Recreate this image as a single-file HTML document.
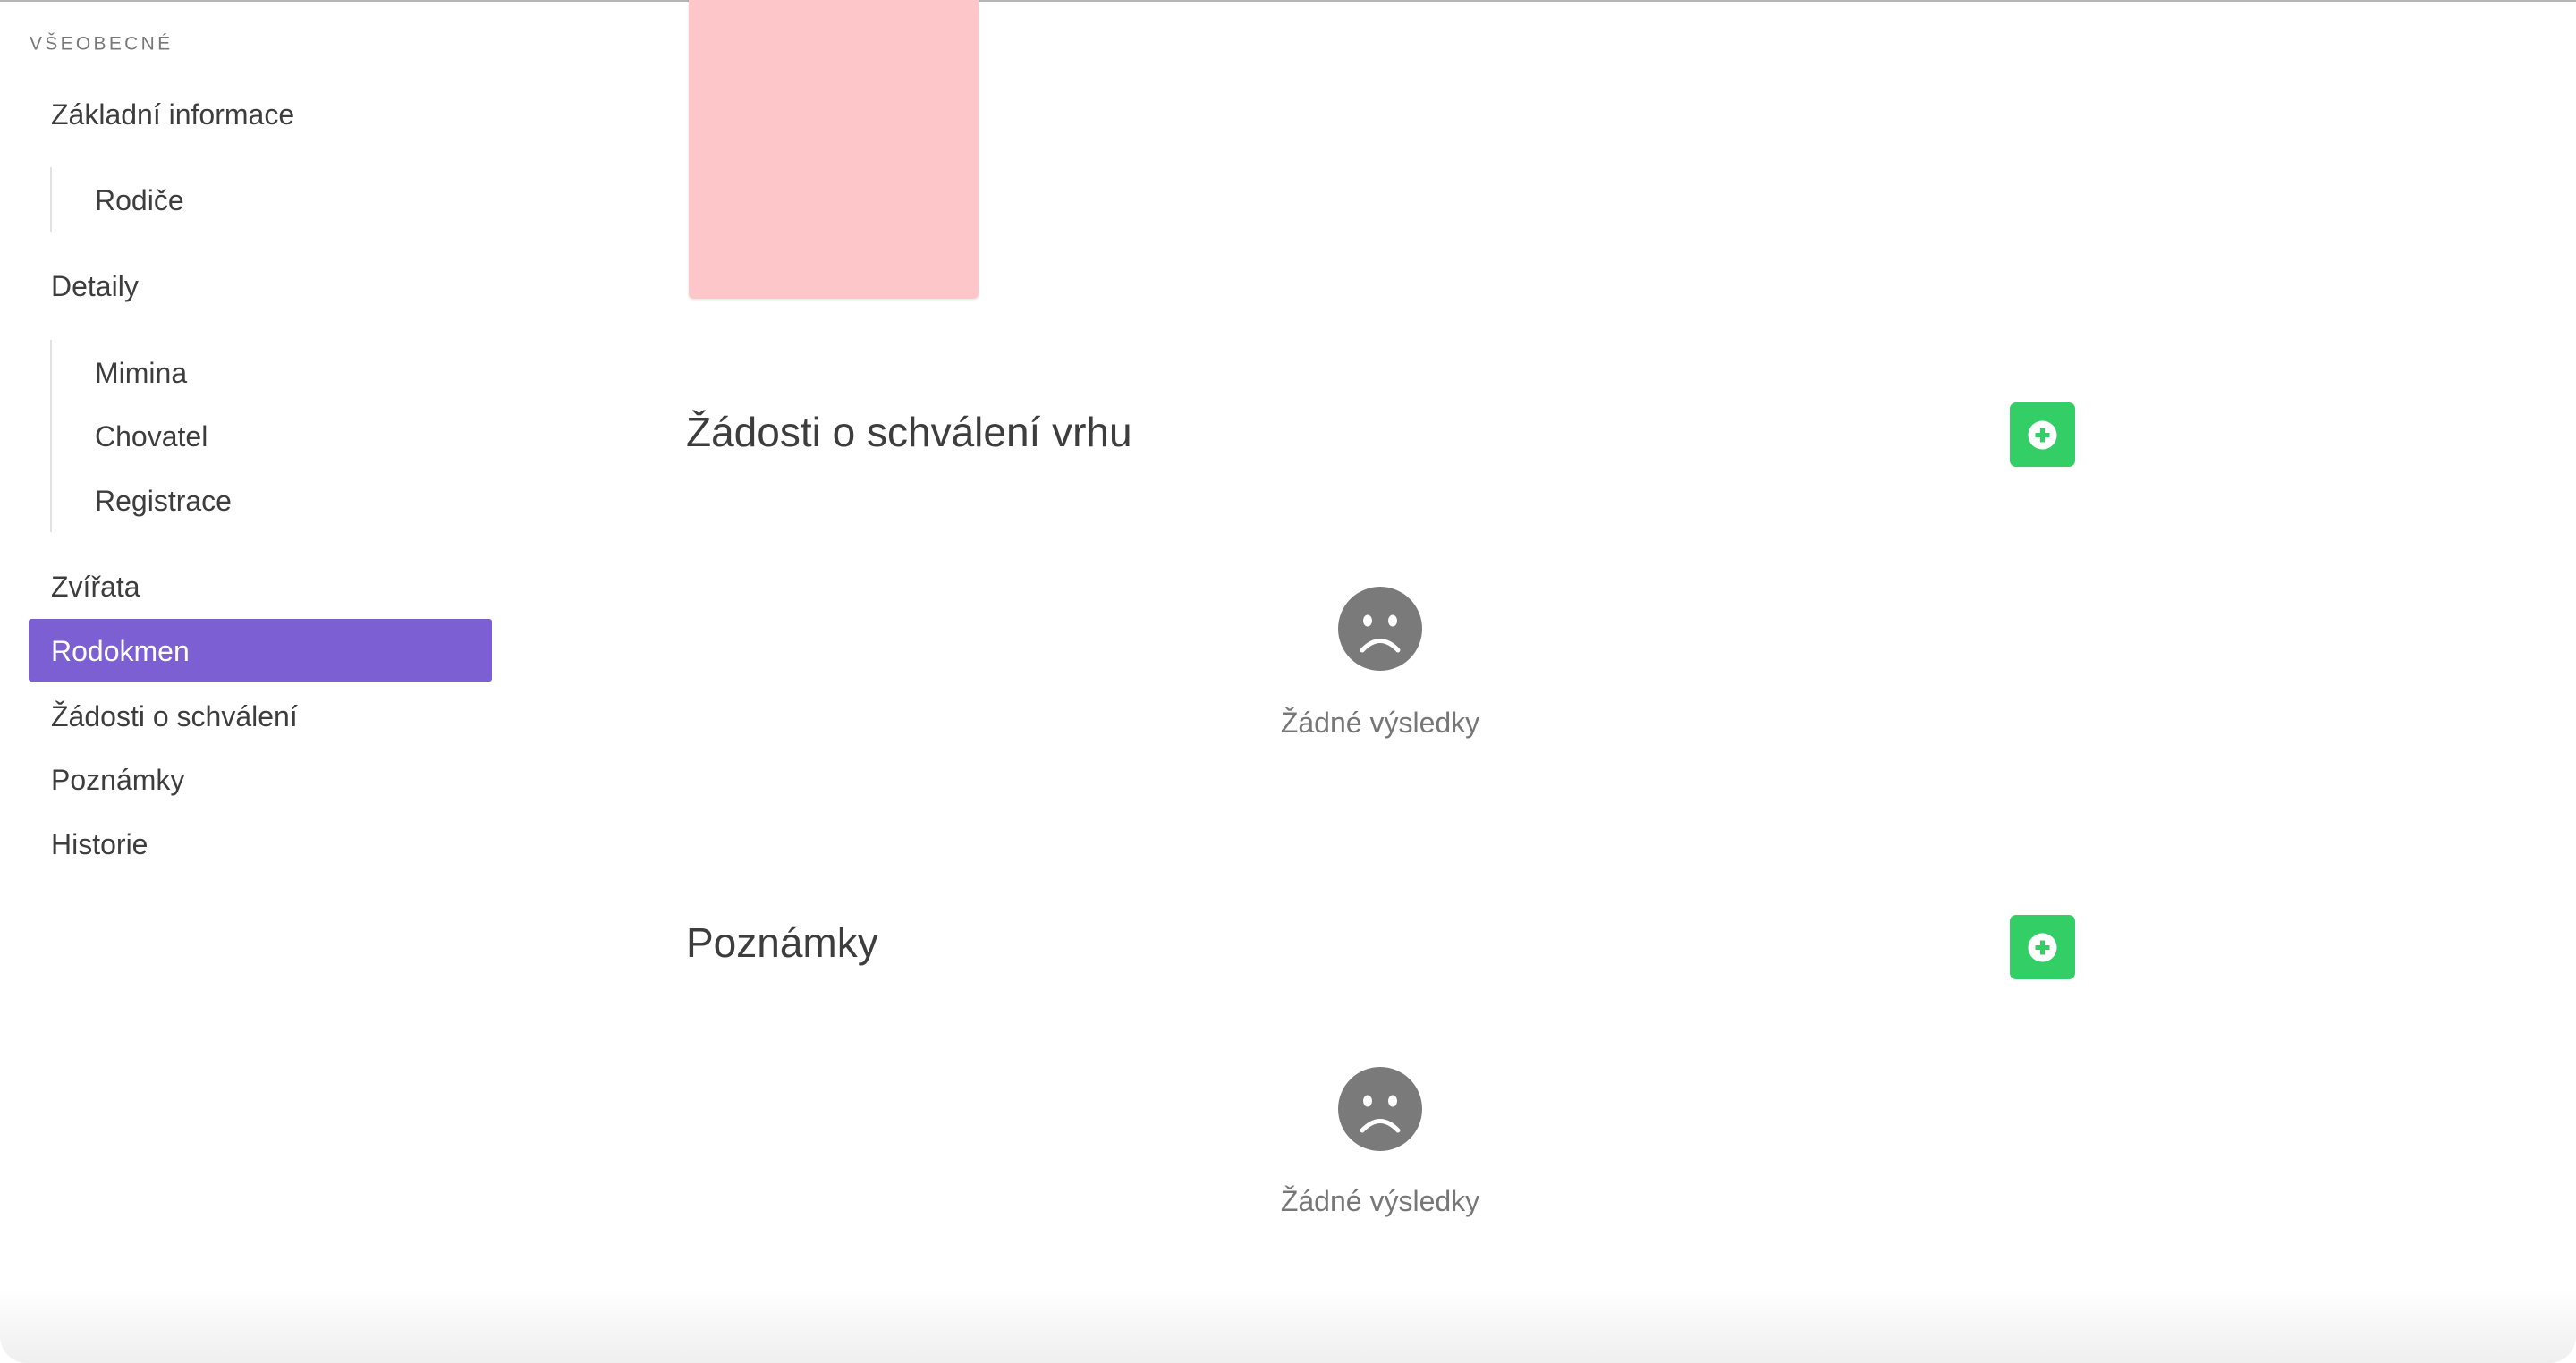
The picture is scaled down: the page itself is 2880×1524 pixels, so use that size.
<!DOCTYPE html>
<html><head><meta charset="utf-8"><style>
*{margin:0;padding:0;box-sizing:border-box}
html,body{width:2880px;height:1524px;overflow:hidden;background:#fff;font-family:"Liberation Sans",sans-serif;color:#3d3d3d}
.top{position:absolute;left:0;top:0;width:2880px;height:2px;background:#b5b5b5}
.t{position:absolute;white-space:nowrap;line-height:1;transform:translateY(-50%)}
.nav{font-size:32px;color:#3d3d3d}
.sec{font-size:21px;letter-spacing:3.3px;color:#777;left:33px;top:49px}
.bar{position:absolute;left:56px;width:2px;background:#e2e2e2}
.active{position:absolute;left:32px;top:692px;width:518px;height:70px;background:#7b5fd3;border-radius:3px}
.pink{position:absolute;left:770px;top:-6px;width:324px;height:340px;background:#fdc6c9;border-radius:5px;box-shadow:0 1px 3px rgba(0,0,0,.12)}
.h{font-size:46px;color:#3d3d3d;left:767px}
.btn{position:absolute;left:2247px;width:73px;height:72px;background:#33cf66;border-radius:7px}
.btn svg{position:absolute;left:20px;top:20px}
.face{position:absolute;left:1496px;width:94px;height:94px}
.nr{font-size:32px;color:#777;left:1543px;transform:translate(-50%,-50%)}
.shade{position:absolute;left:0;top:1440px;width:2880px;height:84px;background:linear-gradient(#fff,#efefef);border-radius:0 0 30px 30px}
</style></head><body>
<div class="top"></div>
<div class="t sec">VŠEOBECNÉ</div>
<div class="t nav" style="left:57px;top:128px">Základní informace</div>
<div class="bar" style="top:187px;height:72px"></div>
<div class="t nav" style="left:106px;top:224px">Rodiče</div>
<div class="t nav" style="left:57px;top:320px">Detaily</div>
<div class="bar" style="top:380px;height:215px"></div>
<div class="t nav" style="left:106px;top:417px">Mimina</div>
<div class="t nav" style="left:106px;top:488px">Chovatel</div>
<div class="t nav" style="left:106px;top:560px">Registrace</div>
<div class="t nav" style="left:57px;top:656px">Zvířata</div>
<div class="active"></div>
<div class="t nav" style="left:57px;top:728px;color:#fff">Rodokmen</div>
<div class="t nav" style="left:57px;top:801px">Žádosti o schválení</div>
<div class="t nav" style="left:57px;top:872px">Poznámky</div>
<div class="t nav" style="left:57px;top:944px">Historie</div>

<div class="pink"></div>

<div class="t h" style="top:483px">Žádosti o schválení vrhu</div>
<div class="btn" style="top:450px"><svg width="33" height="33" viewBox="0 0 33 33"><circle cx="16.5" cy="16.5" r="16" fill="#fff"/><path d="M16.5 8.5v16M8.5 16.5h16" stroke="#33cf66" stroke-width="5"/></svg></div>
<svg class="face" style="top:656px" viewBox="0 0 94 94"><circle cx="47" cy="47" r="47" fill="#7a7a7a"/><ellipse cx="33" cy="38" rx="5" ry="6.5" fill="#fff"/><ellipse cx="61" cy="38" rx="5" ry="6.5" fill="#fff"/><path d="M27 71Q47 50 67 71" stroke="#fff" stroke-width="5" fill="none" stroke-linecap="round"/></svg>
<div class="t nr" style="top:808px">Žádné výsledky</div>

<div class="t h" style="top:1054px">Poznámky</div>
<div class="btn" style="top:1023px"><svg width="33" height="33" viewBox="0 0 33 33"><circle cx="16.5" cy="16.5" r="16" fill="#fff"/><path d="M16.5 8.5v16M8.5 16.5h16" stroke="#33cf66" stroke-width="5"/></svg></div>
<svg class="face" style="top:1193px" viewBox="0 0 94 94"><circle cx="47" cy="47" r="47" fill="#7a7a7a"/><ellipse cx="33" cy="38" rx="5" ry="6.5" fill="#fff"/><ellipse cx="61" cy="38" rx="5" ry="6.5" fill="#fff"/><path d="M27 71Q47 50 67 71" stroke="#fff" stroke-width="5" fill="none" stroke-linecap="round"/></svg>
<div class="t nr" style="top:1343px">Žádné výsledky</div>

<div class="shade"></div>
</body></html>
